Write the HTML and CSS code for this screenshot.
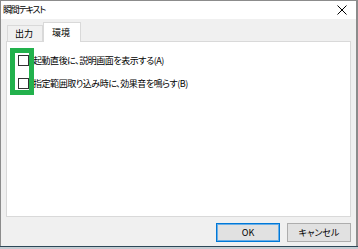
FILE: index.html
```html
<!DOCTYPE html>
<html lang="ja">
<head>
<meta charset="utf-8">
<link rel="stylesheet" href="styles.css">
</head>
<body>
<div class="window">
  <div class="titlebar">
    <span class="title">瞬間テキスト</span>
    <svg class="close" width="10" height="10" viewBox="0 0 10 10"><path d="M0.5 0.5 L9.5 9.5 M9.5 0.5 L0.5 9.5" stroke="#000" stroke-width="1" fill="none"/></svg>
  </div>
  <div class="client">
    <div class="tabs">
      <div class="tab">出力</div>
      <div class="tab active">環境</div>
    </div>
    <div class="panel">
      <label class="row"><span class="box"></span><span class="label">起動直後に、説明画面を表示する(A)</span></label>
      <label class="row"><span class="box"></span><span class="label">指定範囲取り込み時に、効果音を鳴らす(B)</span></label>
    </div>
    <div class="buttons">
      <div class="btn default">OK</div>
      <div class="btn">キャンセル</div>
    </div>
  </div>
  <div class="highlight"></div>
</div>
<div class="desk"></div>
</body>
</html>
```
FILE: styles.css
```css
html, body {
  margin: 0;
  padding: 0;
}
body {
  width: 358px;
  height: 249px;
  overflow: hidden;
  font-family: "Noto Sans CJK JP", "Noto Sans", sans-serif;
  font-size: 9px;
  font-feature-settings: "palt";
  color: #000;
  background: #f0f0f0;
}
.window {
  position: relative;
  box-sizing: border-box;
  height: 246px;
  border: 1px solid #8c8c8c;
  border-bottom: none;
  border-right: 2px solid #8c8c8c;
  background: #f0f0f0;
  display: flex;
  flex-direction: column;
}
.titlebar {
  height: 18px;
  background: #fff;
  display: flex;
  align-items: center;
  justify-content: space-between;
  padding: 0 9px 0 2px;
  flex: none;
}
.title {
  font-size: 9px;
  line-height: 18px;
  letter-spacing: -1.2px;
}
.close {
  display: block;
}
.client {
  flex: 1;
  display: flex;
  flex-direction: column;
  padding: 0 5px 0 5px;
}
.tabs {
  display: flex;
  align-items: flex-end;
  height: 22px;
  padding-left: 1px;
}
.tab {
  box-sizing: border-box;
  height: 16px;
  width: 36px;
  border: 1px solid #d9d9d9;
  border-bottom: none;
  background: #f0f0f0;
  text-align: center;
  line-height: 15px;
  padding-right: 2px;
}
.tab.active {
  height: 20px;
  width: 38px;
  background: #fff;
  margin-bottom: -1px;
  position: relative;
  z-index: 1;
  line-height: 19px;
}
.panel {
  box-sizing: border-box;
  height: 176px;
  background: #fff;
  border: 1px solid #d9d9d9;
  padding: 13px 0 0 11px;
  display: flex;
  flex-direction: column;
  gap: 12px;
}
.row {
  display: flex;
  align-items: center;
  gap: 4px;
  height: 11px;
}
.box {
  box-sizing: border-box;
  width: 11px;
  height: 11px;
  border: 1px solid #333;
  background: #fff;
  flex: none;
}
.label {
  line-height: 11px;
  white-space: nowrap;
  letter-spacing: -0.45px;
}
.buttons {
  display: flex;
  justify-content: flex-end;
  gap: 7px;
  padding-top: 6px;
}
.btn {
  box-sizing: border-box;
  width: 64px;
  height: 19px;
  background: #e1e1e1;
  border: 1px solid #adadad;
  text-align: center;
  line-height: 17px;
}
.btn.default {
  border-color: #0078d7;
  box-shadow: inset 0 0 0 1px #6aaee6;
}
.highlight {
  position: absolute;
  left: 9px;
  top: 47px;
  width: 24px;
  height: 47px;
  box-sizing: border-box;
  border: 5px solid #22b14c;
}
.desk {
  height: 3px;
  border-top: 1px solid #2e4858;
  background: #c3ccd2;
}
```
